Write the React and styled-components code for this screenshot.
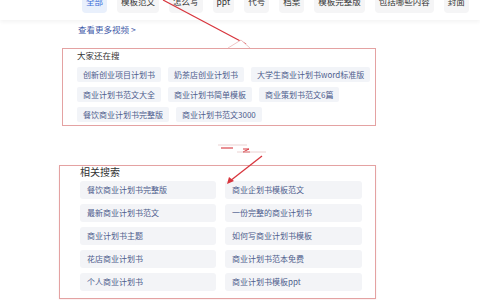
import styled, { createGlobalStyle } from "styled-components";

const GlobalStyle = createGlobalStyle`
  html, body {
    margin: 0;
    padding: 0;
    background: #fff;
  }
  body {
    font-family: "Noto Sans CJK SC", "Noto Sans", sans-serif;
  }
`;

const tabs = ["全部", "模板范文", "怎么写", "ppt", "代号", "档案", "模板完整版", "包括哪些内容", "封面"];

const hotWords = [
  "创新创业项目计划书",
  "奶茶店创业计划书",
  "大学生商业计划书word标准版",
  "商业计划书范文大全",
  "商业计划书简单模板",
  "商业策划书范文6篇",
  "餐饮商业计划书完整版",
  "商业计划书范文3000",
];

const related = [
  "餐饮商业计划书完整版",
  "商业企划书模板范文",
  "最新商业计划书范文",
  "一份完整的商业计划书",
  "商业计划书主题",
  "如何写商业计划书模板",
  "花店商业计划书",
  "商业计划书范本免费",
  "个人商业计划书",
  "商业计划书模板ppt",
];

const Page = styled.div`
  position: relative;
  width: 480px;
  height: 300px;
  overflow: hidden;
  background: #fff;
`;

const Header = styled.div`
  height: 20px;
  overflow: hidden;
  box-shadow: 0 2px 4px rgba(0, 0, 0, 0.05);
`;

const TabRow = styled.div`
  display: flex;
  gap: 10px;
  margin-top: -11px;
  padding-left: 82px;
`;

const Tab = styled.div`
  flex: none;
  height: 24px;
  line-height: 24px;
  padding: 0 4px;
  border-radius: 4px;
  font-size: 8.5px;
  white-space: nowrap;
  background: ${(p) => (p.$active ? "#e9f0fc" : "#f5f5f6")};
  color: ${(p) => (p.$active ? "#3c6fd8" : "#333")};
`;

const MoreLink = styled.div`
  margin: 3px 0 0 78px;
  height: 12px;
  line-height: 12px;
  font-size: 8.5px;
  color: #3f5aa8;
`;

const HotBox = styled.div`
  box-sizing: border-box;
  width: 314px;
  height: 78px;
  margin: 13px 0 0 62px;
  padding: 0 2px 0 14px;
  border: 1px solid #e4a2a2;
`;

const HotTitle = styled.div`
  height: 12px;
  line-height: 12px;
  font-size: 8.5px;
  color: #333;
  margin-bottom: 6px;
`;

const HotList = styled.div`
  display: flex;
  flex-wrap: wrap;
  gap: 5px 7px;
`;

const HotChip = styled.div`
  height: 15px;
  line-height: 15px;
  padding: 0 6px;
  border-radius: 2px;
  background: #f2f4f8;
  color: #4d5c8c;
  font-size: 8px;
  white-space: nowrap;
`;

const RelatedBox = styled.div`
  box-sizing: border-box;
  width: 317px;
  height: 134px;
  margin: 39px 0 0 59px;
  padding: 0 12px 0 20px;
  border: 1px solid #e4a2a2;
  box-shadow: 0 1px 2px rgba(200, 120, 120, 0.15);
`;

const RelatedTitle = styled.div`
  height: 12px;
  line-height: 12px;
  font-size: 10px;
  color: #333;
  margin-bottom: 3px;
`;

const RelatedGrid = styled.div`
  display: grid;
  grid-template-columns: 136px 137px;
  column-gap: 9px;
  row-gap: 5px;
`;

const RelatedChip = styled.div`
  height: 18px;
  line-height: 18px;
  padding-left: 7px;
  border-radius: 3px;
  background: #f3f4f7;
  color: #4d5c8c;
  font-size: 8px;
  white-space: nowrap;
`;

const Marks = styled.svg`
  position: absolute;
  left: 0;
  top: 0;
  pointer-events: none;
`;

export default function App() {
  return (
    <Page>
      <GlobalStyle />
      <Header>
        <TabRow>
          {tabs.map((t, i) => (
            <Tab key={t} $active={i === 0}>
              {t}
            </Tab>
          ))}
        </TabRow>
      </Header>
      <MoreLink>查看更多视频 &gt;</MoreLink>
      <HotBox>
        <HotTitle>大家还在搜</HotTitle>
        <HotList>
          {hotWords.map((w) => (
            <HotChip key={w}>{w}</HotChip>
          ))}
        </HotList>
      </HotBox>
      <RelatedBox>
        <RelatedTitle>相关搜索</RelatedTitle>
        <RelatedGrid>
          {related.map((w) => (
            <RelatedChip key={w}>{w}</RelatedChip>
          ))}
        </RelatedGrid>
      </RelatedBox>

      {/* hand-drawn annotation marks */}
      <Marks width="480" height="300" viewBox="0 0 480 300">
        <line x1="163" y1="0" x2="246" y2="44" stroke="#d8353d" strokeWidth="1.2" />
        <polyline points="228,48 241,40 250,48" fill="#fff" stroke="#eab7b7" strokeWidth="0.8" />
        <line x1="218" y1="145" x2="247" y2="145" stroke="#e6c6c6" strokeWidth="0.8" />
        <line x1="221" y1="148" x2="233" y2="148" stroke="#d8353d" strokeWidth="1.1" />
        <path d="M243 149 L249 149 L243 152 L250 152" fill="none" stroke="#d8353d" strokeWidth="1" />
        <line x1="237" y1="152" x2="266" y2="152" stroke="#e6c6c6" strokeWidth="0.8" />
        <line x1="262" y1="156" x2="230" y2="181" stroke="#d8353d" strokeWidth="1.3" />
        <path d="M227 184 L229 177 L234 181 Z" fill="#d8353d" />
      </Marks>
    </Page>
  );
}
